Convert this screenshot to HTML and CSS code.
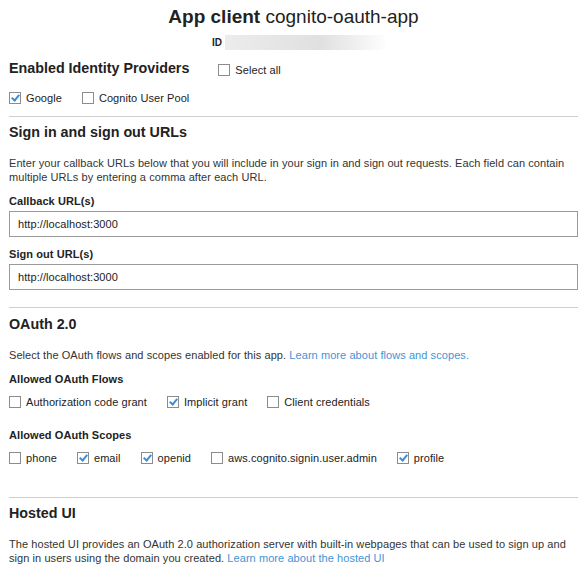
FILE: index.html
```html
<!DOCTYPE html>
<html lang="en">
<head>
    <meta charset="UTF-8">
    <meta name="viewport" content="width=device-width, initial-scale=1.0">
    <title>App client cognito-oauth-app</title>
    <link rel="stylesheet" href="styles.css">
</head>
<body>
    <h1 class="title"><b>App client</b> cognito-oauth-app</h1>
    <div class="client-id">
        <span class="id-label">ID</span>
        <span class="id-mask"></span>
    </div>

    <div class="section providers">
        <div class="providers-head">
            <h2 class="providers-title">Enabled Identity Providers</h2>
            <label class="check"><input type="checkbox"> Select all</label>
        </div>
        <div class="check-row">
            <label class="check"><input type="checkbox" checked> Google</label>
            <label class="check"><input type="checkbox"> Cognito User Pool</label>
        </div>
    </div>

    <div class="section urls">
        <h2>Sign in and sign out URLs</h2>
        <p class="desc">Enter your callback URLs below that you will include in your sign in and sign out requests. Each field can contain multiple URLs by entering a comma after each URL.</p>
        <label class="field-label" for="callbackUrls">Callback URL(s)</label>
        <input class="text-field" type="text" id="callbackUrls" value="http://localhost:3000">
        <label class="field-label" for="signoutUrls">Sign out URL(s)</label>
        <input class="text-field" type="text" id="signoutUrls" value="http://localhost:3000">
    </div>

    <div class="section oauth">
        <h2>OAuth 2.0</h2>
        <p class="desc">Select the OAuth flows and scopes enabled for this app. <a href="#">Learn more about flows and scopes.</a></p>
        <div class="field-label">Allowed OAuth Flows</div>
        <div class="check-row">
            <label class="check"><input type="checkbox"> Authorization code grant</label>
            <label class="check"><input type="checkbox" checked> Implicit grant</label>
            <label class="check"><input type="checkbox"> Client credentials</label>
        </div>
        <div class="field-label scopes-label">Allowed OAuth Scopes</div>
        <div class="check-row">
            <label class="check"><input type="checkbox"> phone</label>
            <label class="check"><input type="checkbox" checked> email</label>
            <label class="check"><input type="checkbox" checked> openid</label>
            <label class="check"><input type="checkbox"> aws.cognito.signin.user.admin</label>
            <label class="check"><input type="checkbox" checked> profile</label>
        </div>
    </div>

    <div class="section hosted">
        <h2>Hosted UI</h2>
        <p class="desc">The hosted UI provides an OAuth 2.0 authorization server with built-in webpages that can be used to sign up and sign in users using the domain you created. <a href="#">Learn more about the hosted UI</a></p>
    </div>
</body>
</html>
```

FILE: styles.css
```css
body {
    font-family: "Liberation Sans", Arial, sans-serif;
    font-size: 11px;
    line-height: 14px;
    letter-spacing: 0.07px;
    color: #333;
    margin: 0 10px 0 9px;
    background-color: #fff;
}
h1, h2, p {
    margin: 0;
}
.title {
    margin-top: 6px;
    text-align: center;
    font-size: 19px;
    line-height: 22px;
    font-weight: normal;
    letter-spacing: 0;
    color: #222;
}
.client-id {
    display: flex;
    justify-content: center;
    align-items: center;
    gap: 3px;
    margin-top: 7px;
    padding-left: 10px;
}
.id-label {
    font-size: 10px;
    font-weight: bold;
    line-height: 15px;
    color: #222;
}
.id-mask {
    width: 160px;
    height: 15px;
    background: linear-gradient(to right, #ececec, #e0e0e0 60%, #fdfdfd);
}
.section {
    border-top: 1px solid #cfcfcf;
    padding-top: 7px;
}
.section.providers {
    border-top: none;
    padding-top: 9px;
    padding-bottom: 11px;
}
.providers-head {
    display: flex;
    align-items: flex-end;
    gap: 29px;
}
h2 {
    font-size: 14.3px;
    line-height: 17px;
    letter-spacing: 0;
    color: #222;
}
.providers-title {
    line-height: 18px;
}
.desc {
    margin-top: 15px;
}
.desc a {
    color: #4394d6;
    text-decoration: none;
}
.field-label {
    display: block;
    margin-top: 10px;
    font-weight: bold;
    color: #222;
}
.text-field {
    display: block;
    box-sizing: border-box;
    width: 100%;
    height: 26px;
    margin: 3px 0 0;
    padding: 0 8px;
    border: 1px solid #9a9a9a;
    font-family: inherit;
    font-size: 11px;
    letter-spacing: inherit;
    color: #222;
}
.urls {
    padding-bottom: 17px;
}
.oauth {
    padding-top: 8px;
    padding-bottom: 32px;
}
.scopes-label {
    margin-top: 19px;
}
.check-row {
    display: flex;
    gap: 20px;
    margin-top: 9px;
}
.providers .check-row {
    margin-top: 14px;
}
.check {
    display: flex;
    align-items: center;
    gap: 5px;
    color: #222;
}
.check input {
    appearance: none;
    -webkit-appearance: none;
    position: relative;
    width: 12px;
    height: 12px;
    margin: 0;
    border: 1px solid #8c8c8c;
    background: #fff;
}
.check input:checked::after {
    content: "";
    position: absolute;
    left: 3px;
    top: 0px;
    width: 3px;
    height: 6px;
    border-right: 2px solid #3b8fd9;
    border-bottom: 2px solid #3b8fd9;
    transform: rotate(40deg);
}
```
